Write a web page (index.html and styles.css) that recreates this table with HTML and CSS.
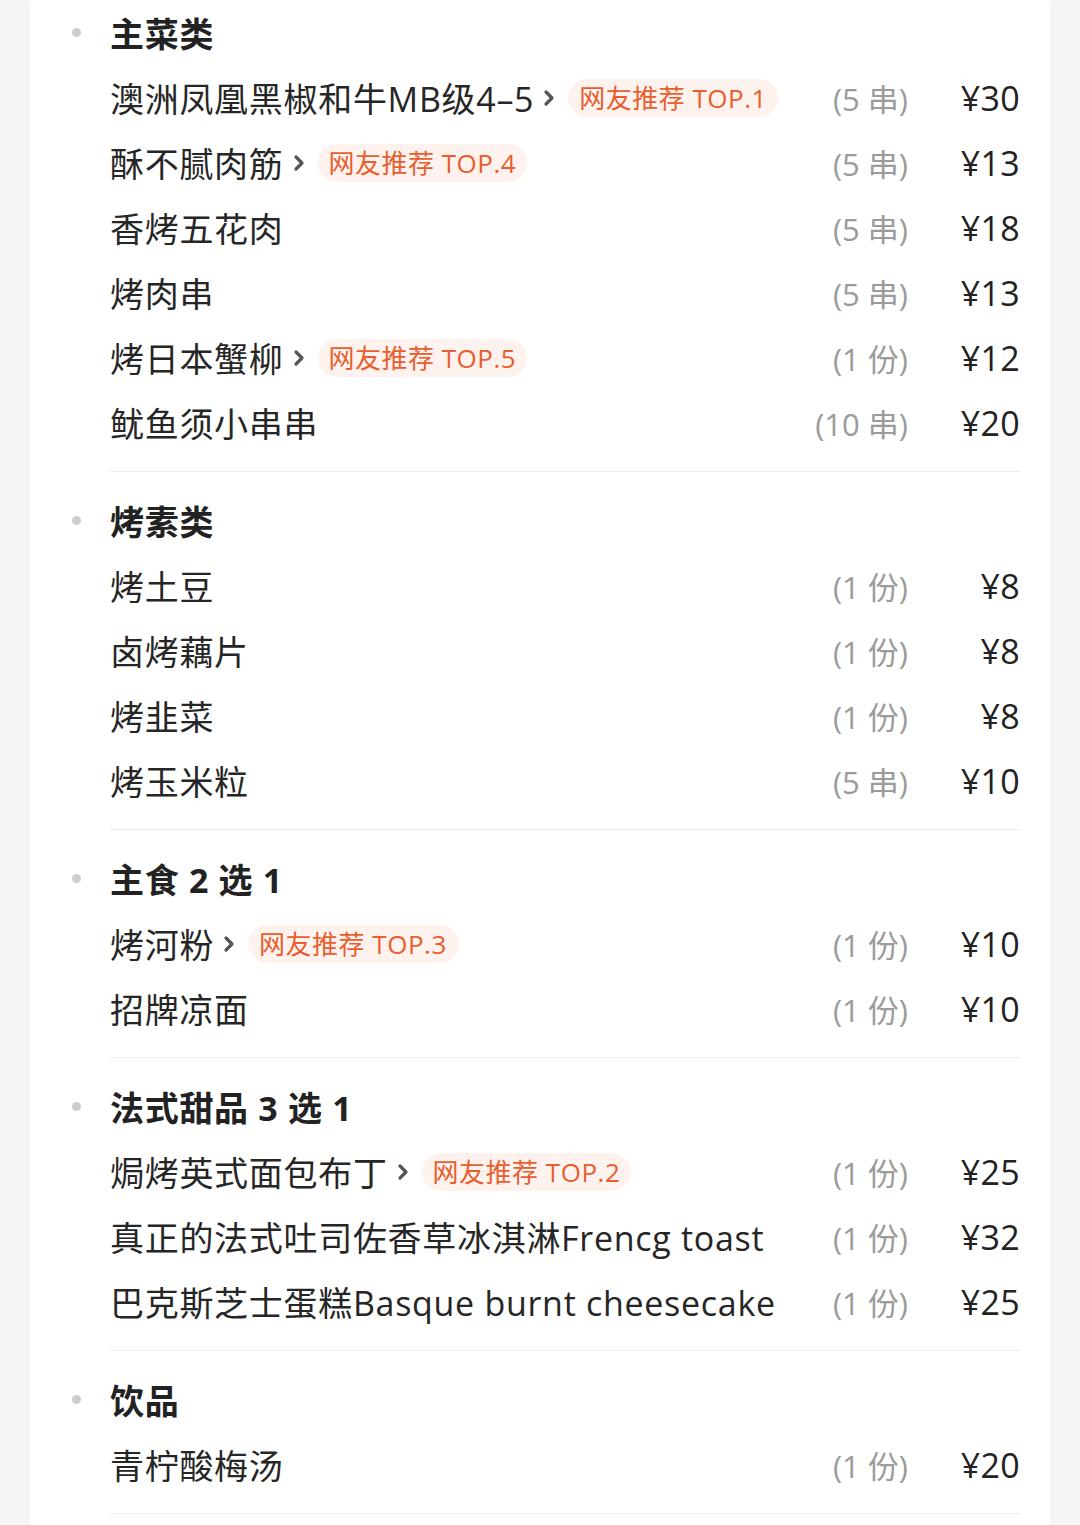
FILE: index.html
```html
<!DOCTYPE html>
<html lang="zh-CN">
<head>
<meta charset="utf-8">
<title>菜单</title>
<link rel="stylesheet" href="styles.css">
</head>
<body>
<div class="card">
  <section class="group">
    <h2 class="group-title"><span class="dot"></span>主菜类</h2>
    <div class="item"><div class="name">澳洲凤凰黑椒和牛MB级4–5<svg class="chev" viewBox="0 0 14 20"><path d="M4 4l6 6-6 6"/></svg><span class="badge">网友推荐 TOP.1</span></div><span class="unit">(5 串)</span><span class="price">¥30</span></div>
    <div class="item"><div class="name">酥不腻肉筋<svg class="chev" viewBox="0 0 14 20"><path d="M4 4l6 6-6 6"/></svg><span class="badge">网友推荐 TOP.4</span></div><span class="unit">(5 串)</span><span class="price">¥13</span></div>
    <div class="item"><div class="name">香烤五花肉</div><span class="unit">(5 串)</span><span class="price">¥18</span></div>
    <div class="item"><div class="name">烤肉串</div><span class="unit">(5 串)</span><span class="price">¥13</span></div>
    <div class="item"><div class="name">烤日本蟹柳<svg class="chev" viewBox="0 0 14 20"><path d="M4 4l6 6-6 6"/></svg><span class="badge">网友推荐 TOP.5</span></div><span class="unit">(1 份)</span><span class="price">¥12</span></div>
    <div class="item"><div class="name">鱿鱼须小串串</div><span class="unit">(10 串)</span><span class="price">¥20</span></div>
  </section>
  <section class="group">
    <h2 class="group-title"><span class="dot"></span>烤素类</h2>
    <div class="item"><div class="name">烤土豆</div><span class="unit">(1 份)</span><span class="price">¥8</span></div>
    <div class="item"><div class="name">卤烤藕片</div><span class="unit">(1 份)</span><span class="price">¥8</span></div>
    <div class="item"><div class="name">烤韭菜</div><span class="unit">(1 份)</span><span class="price">¥8</span></div>
    <div class="item"><div class="name">烤玉米粒</div><span class="unit">(5 串)</span><span class="price">¥10</span></div>
  </section>
  <section class="group">
    <h2 class="group-title"><span class="dot"></span>主食 2 选 1</h2>
    <div class="item"><div class="name">烤河粉<svg class="chev" viewBox="0 0 14 20"><path d="M4 4l6 6-6 6"/></svg><span class="badge">网友推荐 TOP.3</span></div><span class="unit">(1 份)</span><span class="price">¥10</span></div>
    <div class="item"><div class="name">招牌凉面</div><span class="unit">(1 份)</span><span class="price">¥10</span></div>
  </section>
  <section class="group">
    <h2 class="group-title"><span class="dot"></span>法式甜品 3 选 1</h2>
    <div class="item"><div class="name">焗烤英式面包布丁<svg class="chev" viewBox="0 0 14 20"><path d="M4 4l6 6-6 6"/></svg><span class="badge">网友推荐 TOP.2</span></div><span class="unit">(1 份)</span><span class="price">¥25</span></div>
    <div class="item"><div class="name">真正的法式吐司佐香草冰淇淋Frencg toast</div><span class="unit">(1 份)</span><span class="price">¥32</span></div>
    <div class="item"><div class="name">巴克斯芝士蛋糕Basque burnt cheesecake</div><span class="unit">(1 份)</span><span class="price">¥25</span></div>
  </section>
  <section class="group">
    <h2 class="group-title"><span class="dot"></span>饮品</h2>
    <div class="item"><div class="name">青柠酸梅汤</div><span class="unit">(1 份)</span><span class="price">¥20</span></div>
  </section>
</div>
</body>
</html>
```

FILE: styles.css
```css
html, body {
  margin: 0;
  padding: 0;
  background: #f5f5f5;
}
body {
  font-family: "Open Sans", "Noto Sans CJK SC", sans-serif;
  color: #262626;
  overflow: hidden;
}
.card {
  margin: -16px 30px 0;
  background: #ffffff;
  border-radius: 22px;
  padding-bottom: 40px;
}
.group {
  margin: 0 30px 0 80px;
  padding: 16px 0;
  border-bottom: 1.5px solid #ececec;
}
.group-title {
  display: flex;
  align-items: center;
  gap: 29px;
  margin: 0 0 0 -38px;
  height: 65px;
  font-size: 34px;
  font-weight: 700;
  letter-spacing: 0.7px;
  color: #222;
}
.dot {
  width: 9px;
  height: 9px;
  border-radius: 50%;
  background: #cdcdcd;
  flex: none;
}
.item {
  display: flex;
  align-items: center;
  height: 65px;
  font-size: 34px;
}
.name {
  flex: 1;
  display: flex;
  align-items: center;
  white-space: nowrap;
  letter-spacing: 0.7px;
  color: #262626;
}
.chev {
  flex: none;
  width: 14px;
  height: 20px;
  margin-left: 8px;
  fill: none;
  stroke: #555;
  stroke-width: 3.2;
  stroke-linecap: round;
  stroke-linejoin: round;
}
.badge {
  margin-left: 12px;
  height: 38px;
  line-height: 38px;
  padding: 0 11px;
  border-radius: 19px;
  background: #fef2ef;
  color: #e85e2e;
  font-size: 26px;
  font-weight: 400;
  letter-spacing: 0.5px;
}
.unit {
  color: #9b9b9b;
  font-size: 31px;
  text-align: right;
}
.price {
  width: 112px;
  text-align: right;
  color: #222;
  font-size: 34px;
  letter-spacing: 0.3px;
}
```
